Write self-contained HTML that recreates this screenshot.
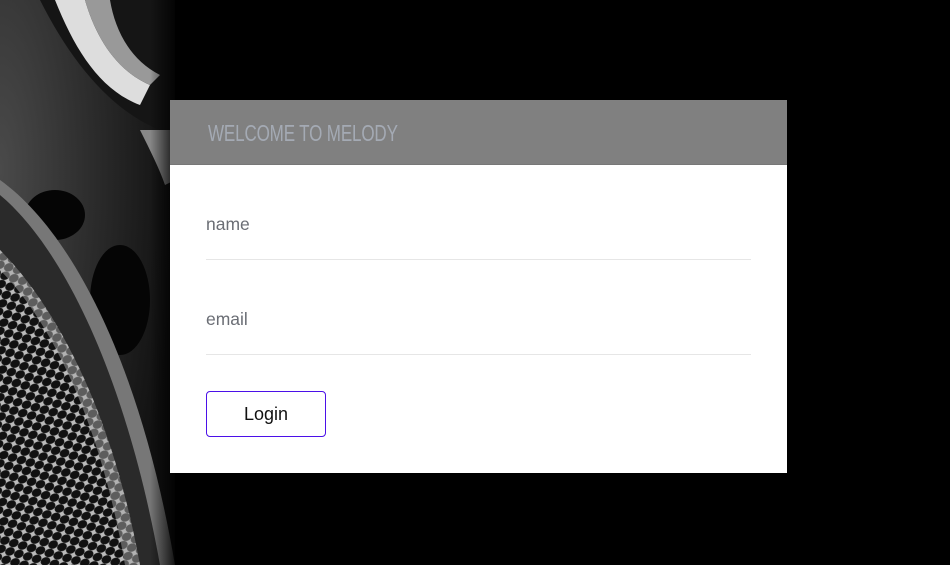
<!DOCTYPE html>
<html><head><meta charset="utf-8"><style>
html,body{margin:0;padding:0;width:950px;height:565px;background:#000;overflow:hidden;font-family:"Liberation Sans",sans-serif}
.bg{position:absolute;left:0;top:0}
.card{position:absolute;left:170px;top:100px;width:617px;height:373px;background:#fff}
.hd{height:65px;background:#808080;border-bottom:1px solid #777;box-sizing:border-box;position:relative}
.hd span{position:absolute;left:38px;top:20px;font-family:"Liberation Sans Narrow","Liberation Sans",sans-serif;font-size:23px;color:#a4aab4;letter-spacing:-0.2px;transform:scaleX(0.74);transform-origin:left;white-space:nowrap}
.f{position:absolute;left:36px;width:545px;border-bottom:1px solid #e6e6e6;color:#6b6e75;font-size:17.5px}
.btn{position:absolute;left:36px;top:291px;width:120px;height:46px;border:1px solid #4b10e8;border-radius:4px;box-sizing:border-box;text-align:center;line-height:44px;font-size:18px;color:#111}
</style></head><body>
<svg class="bg" width="950" height="565" viewBox="0 0 950 565">
<defs>
<radialGradient id="g1" cx="0" cy="0.3" r="1"><stop offset="0" stop-color="#4a4a4a"/><stop offset="1" stop-color="#111"/></radialGradient>
<pattern id="hex" width="14" height="12" patternUnits="userSpaceOnUse" patternTransform="rotate(-25)">
<rect width="14" height="12" fill="#bbb"/>
<ellipse cx="7" cy="6" rx="5" ry="4" fill="#111"/>
<ellipse cx="0" cy="0" rx="5" ry="4" fill="#111"/><ellipse cx="14" cy="0" rx="5" ry="4" fill="#111"/>
<ellipse cx="0" cy="12" rx="5" ry="4" fill="#111"/><ellipse cx="14" cy="12" rx="5" ry="4" fill="#111"/>
</pattern>
<linearGradient id="fade" x1="0" x2="1"><stop offset="0" stop-color="#000" stop-opacity="0"/><stop offset="1" stop-color="#000"/></linearGradient>
</defs>
<rect x="0" y="0" width="175" height="565" fill="url(#g1)"/>
<path d="M40 0 C70 60 110 110 160 130 L175 130 L175 0 Z" fill="#151515"/>
<path d="M55 0 C75 50 100 90 140 105 L150 85 C115 70 95 35 85 0 Z" fill="#ddd"/>
<path d="M85 0 C95 35 115 70 150 85 L160 75 C130 60 115 30 110 0 Z" fill="#999"/>
<path d="M140 130 C150 150 160 170 165 185 L175 180 L175 130 Z" fill="#888"/>
<ellipse cx="55" cy="215" rx="30" ry="25" fill="#050505"/>
<ellipse cx="120" cy="300" rx="30" ry="55" fill="#050505"/>
<path d="M0 180 C70 230 140 360 175 565 L0 565 Z" fill="#777"/>
<path d="M0 195 C60 245 125 370 160 565 L0 565 Z" fill="#2a2a2a"/>
<path d="M0 250 C50 300 110 400 140 565 L0 565 Z" fill="url(#hex)"/>
<path d="M0 250 C50 300 110 400 140 565 L125 565 C100 420 50 320 0 270 Z" fill="#aaa" opacity="0.5"/>
<rect x="150" y="0" width="30" height="565" fill="url(#fade)"/>
</svg>
<div class="card">
<div class="hd"><span>WELCOME TO MELODY</span></div>
<div class="f" style="top:114px;height:45px">name</div>
<div class="f" style="top:209px;height:45px">email</div>
<div class="btn">Login</div>
</div>
</body></html>
